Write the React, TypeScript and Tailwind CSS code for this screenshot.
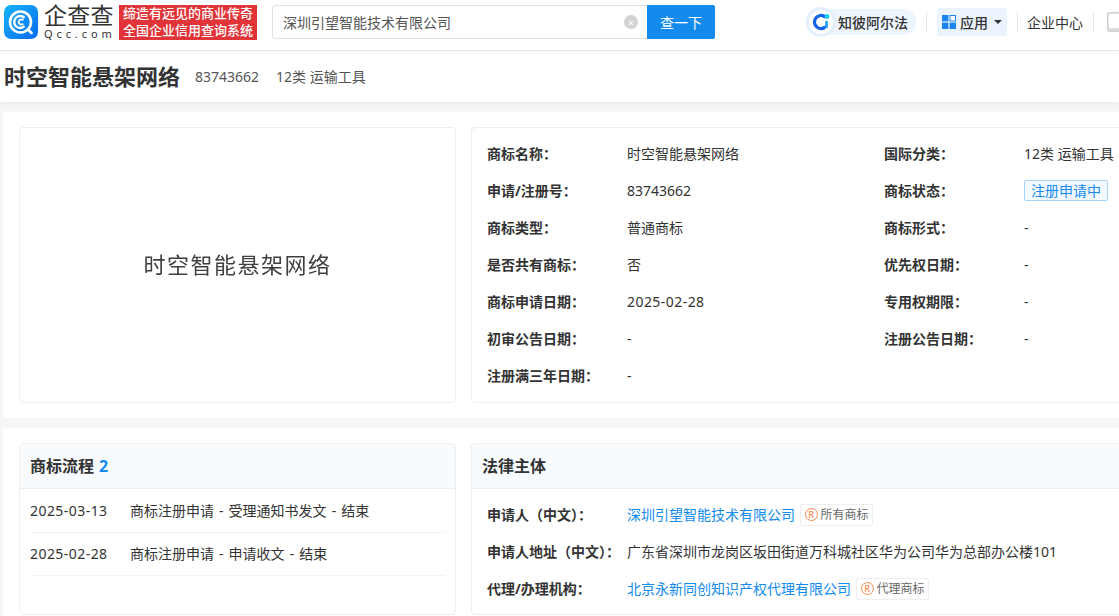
const font = "font-['Noto_Sans','Noto_Sans_CJK_SC',sans-serif]";

const rows = [
  ["商标名称：", "时空智能悬架网络", "国际分类：", "12类 运输工具"],
  ["申请/注册号：", "83743662", "商标状态：", "status"],
  ["商标类型：", "普通商标", "商标形式：", "-"],
  ["是否共有商标：", "否", "优先权日期：", "-"],
  ["商标申请日期：", "2025-02-28", "专用权期限：", "-"],
  ["初审公告日期：", "-", "注册公告日期：", "-"],
  ["注册满三年日期：", "-", "", ""],
];

const flows = [
  ["2025-03-13", "商标注册申请 - 受理通知书发文 - 结束"],
  ["2025-02-28", "商标注册申请 - 申请收文 - 结束"],
];

function Logo() {
  return (
    <svg width="34" height="34" viewBox="0 0 34 34" className="shrink-0">
      <defs>
        <linearGradient id="lg" x1="0" y1="0" x2="1" y2="1">
          <stop offset="0" stopColor="#16b4fa" />
          <stop offset="1" stopColor="#0a6cf0" />
        </linearGradient>
      </defs>
      <rect width="34" height="34" rx="7" fill="url(#lg)" />
      <circle cx="16.5" cy="17" r="10.5" fill="none" stroke="#fff" strokeWidth="2.6" />
      <path d="M24 24.5l3.5 3.5" stroke="#fff" strokeWidth="2.6" strokeLinecap="round" />
      <path d="M20.5 12.8a6 6 0 1 0 0 8.4" fill="none" stroke="#fff" strokeWidth="2.4" />
      <path d="M19.3 15.3a2.6 2.6 0 1 0 0 3.4" fill="none" stroke="#fff" strokeWidth="1.8" />
    </svg>
  );
}

function AlphaIcon() {
  return (
    <svg width="30" height="30" viewBox="0 0 30 30" className="shrink-0">
      <circle cx="15" cy="15" r="15" fill="#e4effd" />
      <circle cx="15" cy="15" r="12" fill="#fff" />
      <path d="M18.5 9.5a6.5 6.5 0 1 0 0 11" fill="none" stroke="#1463e8" strokeWidth="3.4" strokeLinecap="round" />
      <path d="M20.5 14v7" stroke="#1aa0f5" strokeWidth="2.6" />
      <circle cx="21" cy="9.5" r="2.4" fill="#17cdf0" />
    </svg>
  );
}

function AppsIcon() {
  return (
    <svg width="14" height="14" viewBox="0 0 14 14" className="shrink-0">
      <rect x="0" y="0" width="6.4" height="6.4" fill="#1b84ee" />
      <rect x="8" y="0.5" width="5.5" height="5.5" fill="#fff" stroke="#1b84ee" />
      <rect x="0" y="7.6" width="6.4" height="6.4" fill="#1b84ee" />
      <rect x="7.6" y="7.6" width="6.4" height="6.4" fill="#1b84ee" />
    </svg>
  );
}

function PhoneIcon() {
  return (
    <svg width="14" height="20" viewBox="0 0 14 20" className="shrink-0">
      <rect x="0.75" y="0.75" width="12.5" height="18.5" rx="2.5" fill="#fff" stroke="#cfcfcf" strokeWidth="1.5" />
      <path d="M1 16h12v1.5a1.8 1.8 0 0 1-1.8 1.8H2.8A1.8 1.8 0 0 1 1 17.5z" fill="#dcdcdc" />
    </svg>
  );
}

function RegTag({ text }: { text: string }) {
  return (
    <span className="ml-[5px] inline-flex h-[22px] items-center gap-[3px] rounded-[2px] border border-[#eeeeee] px-[3.5px] text-[12px] text-[#666666]">
      <span className="flex h-[13px] w-[13px] items-center justify-center rounded-full border-[1.5px] border-[#f98a4c] text-[9px] font-medium leading-none text-[#f98a4c]">
        R
      </span>
      {text}
    </span>
  );
}

function Header() {
  return (
    <div className="relative z-10 flex h-[51px] items-center border-b border-[#e8e8e8] bg-white pb-[6px] pl-[4px] shadow-[0_1px_3px_rgba(0,0,0,0.04)]">
      <Logo />
      <div className="ml-[6px] flex h-[34px] w-[70px] shrink-0 flex-col justify-between whitespace-nowrap">
        <span className="h-[21px] text-[23px] leading-[21px] tracking-[0.2px] text-[#333333]">企查查</span>
        <span className="h-[11px] text-[11px] leading-[11px] tracking-[3.9px] text-[#333333]">Qcc.com</span>
      </div>
      <div className="ml-[5px] flex h-[35px] w-[138px] shrink-0 flex-col items-center justify-center bg-[#e13438] text-[13px] font-medium leading-[17px] text-white">
        <span>缔造有远见的商业传奇</span>
        <span>全国企业信用查询系统</span>
      </div>
      <div className="ml-[15px] flex h-[34px] w-[375px] shrink-0 items-center justify-between rounded-l-[4px] border border-r-0 border-[#e0e0e0] pl-[10px] pr-[9px] text-[14px] text-[#555555]">
        <span>深圳引望智能技术有限公司</span>
        <span className="flex h-[14px] w-[14px] items-center justify-center rounded-full bg-[#d2d2d2] text-[11px] leading-none text-white">×</span>
      </div>
      <div className="flex h-[34px] w-[68px] shrink-0 items-center justify-center rounded-r-[2px] bg-[#128bed] text-[14px] text-white">查一下</div>
      <div className="ml-[91px] flex h-[26px] w-[110px] shrink-0 items-center rounded-full bg-[#eef5fe] text-[14px] font-medium text-[#333333]">
        <AlphaIcon />
        <span className="ml-[2px]">知彼阿尔法</span>
      </div>
      <div className="ml-[10px] h-[18px] w-px shrink-0 bg-[#e6e6e6]" />
      <div className="ml-[10px] flex h-[28px] w-[70px] shrink-0 items-center justify-center gap-[4px] rounded-[3px] bg-[#eaf3fe] text-[14px] font-medium text-[#333333]">
        <AppsIcon />
        <span>应用</span>
        <span className="ml-[2px] h-0 w-0 border-x-[4px] border-t-[4px] border-x-transparent border-t-[#333333]" />
      </div>
      <div className="ml-[10px] h-[18px] w-px shrink-0 bg-[#e6e6e6]" />
      <span className="ml-[9px] shrink-0 text-[14px] text-[#333333]">企业中心</span>
      <div className="ml-[10px] h-[18px] w-px shrink-0 bg-[#e6e6e6]" />
      <span className="ml-[13px]"><PhoneIcon /></span>
    </div>
  );
}

function TitleBar() {
  return (
    <div className="flex h-[51px] items-center bg-white pl-[4px] shadow-[0_2px_6px_rgba(0,0,0,0.06)]">
      <h1 className="text-[22px] font-bold text-[#333333]">时空智能悬架网络</h1>
      <span className="ml-[15px] text-[14px] text-[#555555]">83743662</span>
      <span className="ml-[17px] text-[14px] text-[#555555]">12类 运输工具</span>
    </div>
  );
}

function InfoValue({ value }: { value: string }) {
  if (value === "status") {
    return (
      <span className="flex h-[21px] w-fit items-center rounded-[2px] border border-[#a5d3f8] bg-[#f3f9fe] px-[6px] text-[14px] text-[#128bed]">
        注册申请中
      </span>
    );
  }
  const isDate = /^\d{4}-/.test(value);
  return <span className={isDate ? "whitespace-nowrap tracking-[0.45px]" : "whitespace-nowrap"}>{value}</span>;
}

export default function App() {
  return (
    <div className={`${font} h-[616px] w-[1119px] overflow-hidden bg-[#f6f6f6] text-[14px] text-[#333333]`}>
      <Header />
      <TitleBar />
      <div className="ml-[3px] mt-[10px] flex h-[306px] w-[1300px] gap-[15px] bg-white px-[16px] pt-[15px]">
        <div className="flex h-[276px] w-[437px] shrink-0 items-center justify-center rounded-[4px] border border-[#eeeeee] pb-[2px] text-[22px] text-[#3f3f3f] [filter:blur(0.4px)]">
          <span className="tracking-[1.5px]">时空智能悬架网络</span>
        </div>
        <div className="h-[276px] w-[800px] shrink-0 rounded-[4px] border border-[#eeeeee] pl-[15px] pt-[7px]">
          <div className="grid grid-cols-[140px_257px_140px_1fr]">
            {rows.map((r) => (
              <div key={r[0]} className="col-span-4 grid h-[37px] grid-cols-subgrid items-center">
                <span className="font-bold">{r[0]}</span>
                <InfoValue value={r[1]} />
                <span className="font-bold">{r[2]}</span>
                <InfoValue value={r[3]} />
              </div>
            ))}
          </div>
        </div>
      </div>
      <div className="ml-[3px] mt-[10px] flex h-[200px] w-[1300px] gap-[15px] bg-white px-[16px] pt-[15px]">
        <div className="h-[172px] w-[437px] shrink-0 rounded-[4px] border border-[#eeeeee]">
          <div className="flex h-[45px] items-center gap-[5px] border-b border-[#eeeeee] bg-[#f8fbfe] pl-[10px] text-[16px] font-bold">
            <span>商标流程</span>
            <span className="text-[#128bed]">2</span>
          </div>
          <div className="px-[10px] pt-[1px]">
            {flows.map((f) => (
              <div key={f[0]} className="flex h-[43px] items-center border-b border-[#f3f3f3] pb-[2px]">
                <span className="w-[100px] shrink-0 tracking-[0.45px]">{f[0]}</span>
                <span className="[word-spacing:1.4px]">{f[1]}</span>
              </div>
            ))}
          </div>
        </div>
        <div className="h-[172px] w-[800px] shrink-0 rounded-[4px] border border-[#eeeeee]">
          <div className="flex h-[45px] items-center border-b border-[#eeeeee] bg-[#f8fbfe] pl-[10px] text-[16px] font-bold">法律主体</div>
          <div className="flex flex-col pl-[15px] pt-[7px]">
            <div className="flex h-[37px] items-center">
              <span className="w-[140px] shrink-0 font-bold">申请人（中文）：</span>
              <span className="text-[#128bed]">深圳引望智能技术有限公司</span>
              <RegTag text="所有商标" />
            </div>
            <div className="flex h-[37px] items-center">
              <span className="w-[140px] shrink-0 font-bold">申请人地址（中文）：</span>
              <span>广东省深圳市龙岗区坂田街道万科城社区华为公司华为总部办公楼101</span>
            </div>
            <div className="flex h-[37px] items-center">
              <span className="w-[140px] shrink-0 font-bold">代理/办理机构：</span>
              <span className="text-[#128bed]">北京永新同创知识产权代理有限公司</span>
              <RegTag text="代理商标" />
            </div>
          </div>
        </div>
      </div>
    </div>
  );
}
